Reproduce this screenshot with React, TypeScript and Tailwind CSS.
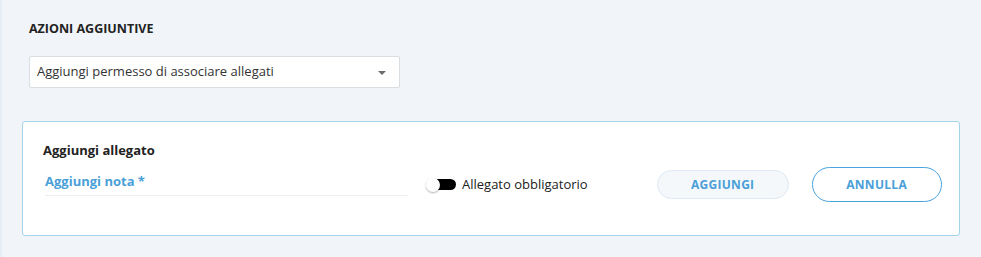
import React, { useState } from 'react';

const App: React.FC = () => {
  const [required, setRequired] = useState(false);

  return (
    <div
      className="w-[981px] h-[257px] bg-[#f1f5f9] border-l-2 border-[#e6edf4] overflow-hidden"
      style={{ fontFamily: '"Open Sans", "Noto Sans", sans-serif' }}
    >
      <div className="pl-[27px] pt-[21px]">
        <h3 className="text-[12.5px] leading-[16px] font-bold text-[#222]">AZIONI AGGIUNTIVE</h3>
        <div className="mt-[19px] w-[371px] h-[32px] bg-white border border-[#d9dee3] rounded-[2px] flex items-center justify-between pl-[7px] pr-[13px]">
          <span className="text-[13px] text-[#333]">Aggiungi permesso di associare allegati</span>
          <svg width="8" height="4" viewBox="0 0 8 4" className="mt-[1px]">
            <path d="M0 0h8L4 4z" fill="#6b6b6b" />
          </svg>
        </div>
      </div>

      {/* Attachment card */}
      <div className="ml-[20px] mt-[33px] w-[938px] h-[115px] bg-white border border-[#a3d4ec] rounded-[3px] pl-[20px] pt-[19px]">
        <div className="text-[13px] leading-[18px] font-bold text-[#222]">Aggiungi allegato</div>
        <div className="flex items-center mt-[2px]">
          <div className="w-[363px] ml-[2px] mt-[2px] mb-[12px] pt-[5px] border-b border-[#ebeef1] h-[33px]">
            <span className="text-[13px] font-bold text-[#4a9fd8]">Aggiungi nota *</span>
          </div>
          <button
            type="button"
            onClick={() => setRequired(!required)}
            className="ml-[18px] flex items-center"
          >
            <span className="relative w-[30px] h-[14px] flex items-center">
              <span className="absolute left-[6px] right-0 h-[11px] rounded-full bg-black" />
              <span className="absolute left-0 top-0 w-[14px] h-[14px] rounded-full bg-white shadow-[0_1px_2px_rgba(0,0,0,0.3)]" />
            </span>
            <span className="ml-[6px] text-[13px] text-[#222]">Allegato obbligatorio</span>
          </button>
          <button
            type="button"
            className="ml-[69px] w-[132px] h-[29px] rounded-full bg-[#f5f8fb] border border-[#dde9f4] text-[12px] font-bold text-[#4a9fd8] tracking-[0.3px]"
          >
            AGGIUNGI
          </button>
          <button
            type="button"
            className="ml-[23px] w-[130px] h-[35px] rounded-full bg-white border border-[#4aa3dc] text-[12px] font-bold text-[#4a9fd8] tracking-[0.3px]"
          >
            ANNULLA
          </button>
        </div>
      </div>
    </div>
  );
};

export default App;
